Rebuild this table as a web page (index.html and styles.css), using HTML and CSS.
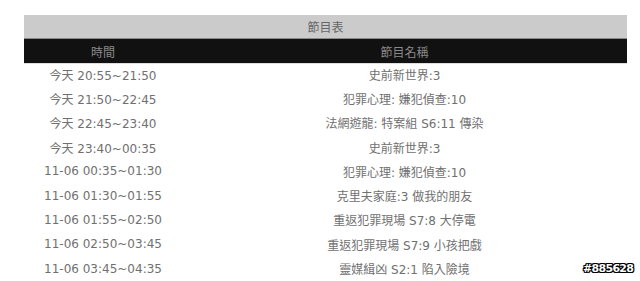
FILE: index.html
```html
<!DOCTYPE html>
<html>
<head>
<meta charset="utf-8">
<link rel="stylesheet" href="styles.css">
</head>
<body>
<div class="page">
  <table class="schedule">
    <thead>
      <tr><th class="title" colspan="2">節目表</th></tr>
      <tr class="head"><th class="col-time">時間</th><th class="col-name">節目名稱</th></tr>
    </thead>
    <tbody>
      <tr><td>今天 20:55~21:50</td><td>史前新世界:3</td></tr>
      <tr><td>今天 21:50~22:45</td><td>犯罪心理: 嫌犯偵查:10</td></tr>
      <tr><td>今天 22:45~23:40</td><td>法網遊龍: 特案組 S6:11 傳染</td></tr>
      <tr><td>今天 23:40~00:35</td><td>史前新世界:3</td></tr>
      <tr><td>11-06 00:35~01:30</td><td>犯罪心理: 嫌犯偵查:10</td></tr>
      <tr><td>11-06 01:30~01:55</td><td>克里夫家庭:3 做我的朋友</td></tr>
      <tr><td>11-06 01:55~02:50</td><td>重返犯罪現場 S7:8 大停電</td></tr>
      <tr><td>11-06 02:50~03:45</td><td>重返犯罪現場 S7:9 小孩把戲</td></tr>
      <tr><td>11-06 03:45~04:35</td><td>靈媒緝凶 S2:1 陷入險境</td></tr>
    </tbody>
  </table>
  <span class="tag">#885628</span>
</div>
</body>
</html>
```
FILE: styles.css
```css
html, body {
  margin: 0;
  padding: 0;
  background: #fff;
}
.page {
  position: relative;
  width: 640px;
  height: 281px;
  padding: 15px 0 0 24px;
  box-sizing: border-box;
  overflow: hidden;
}
.schedule {
  width: 603px;
  border-collapse: collapse;
  font-family: "DejaVu Sans", Verdana, "Noto Sans CJK TC", sans-serif;
  font-size: 12px;
  color: #707070;
}
.schedule th, .schedule td {
  padding: 0;
  text-align: center;
  font-weight: normal;
}
.title {
  height: 23px;
  background: #cbcbcb;
  color: #666;
  border-bottom: 1px solid #8a8a8a;
}
.head th {
  height: 24px;
  background: #111;
  color: #8a8a8a;
  border-bottom: 1px solid #ddd;
}
.col-time {
  width: 158px;
}
.schedule td {
  height: 24.3px;
  box-sizing: border-box;
  padding-bottom: 3px;
}
.tag {
  position: absolute;
  left: 583px;
  top: 262px;
  font-family: "DejaVu Sans", sans-serif;
  font-weight: bold;
  font-size: 11px;
  color: #fff;
  letter-spacing: -0.7px;
  text-shadow: 1px 0 0 #000, -1px 0 0 #000, 0 1px 0 #000, 0 -1px 0 #000, 1px 1px 0 #000, -1px -1px 0 #000, 1px -1px 0 #000, -1px 1px 0 #000;
}
```
